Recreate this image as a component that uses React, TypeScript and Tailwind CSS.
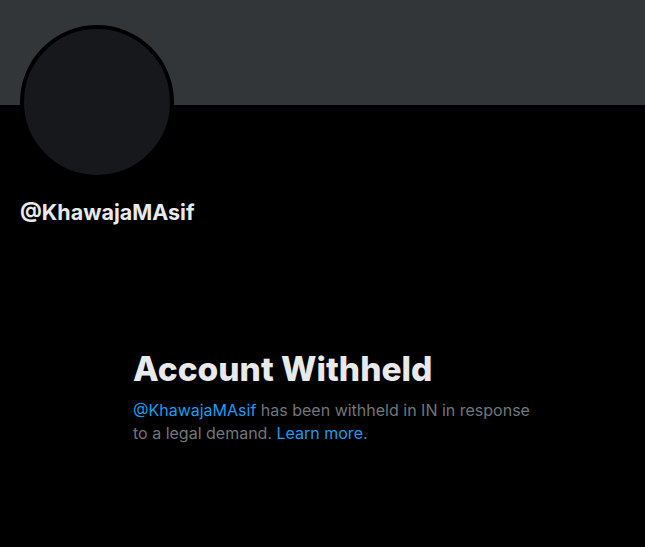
import React from 'react'

const App = () => {
    return (
        <div className="min-h-[547px] w-full bg-black font-['Inter','Noto_Sans',sans-serif]">
            <div className="h-[105px] w-full bg-[#333639]"></div>

            <div className="px-[20px]">
                <div className="-mt-[80px] h-[154px] w-[154px] rounded-full border-[4px] border-black bg-[#16181c]"></div>

                <div className="mt-[21px] text-[21.5px] font-bold leading-[24px] text-[#e7e9ea]">
                    @KhawajaMAsif
                </div>
            </div>

            <div className="ml-[133px] mt-[127px] w-[420px]">
                <h1 className="text-[33.5px] font-extrabold leading-[36px] text-[#e7e9ea]">
                    Account Withheld
                </h1>
                <p className="mt-[12px] w-[400px] text-[16px] leading-[23px] text-[#71767b]">
                    <span className="text-[#1d9bf0]">@KhawajaMAsif</span> has been withheld in IN in response to a legal demand.{' '}
                    <span className="text-[#1d9bf0]">Learn more</span>.
                </p>
            </div>
        </div>
    )
}

export default App
